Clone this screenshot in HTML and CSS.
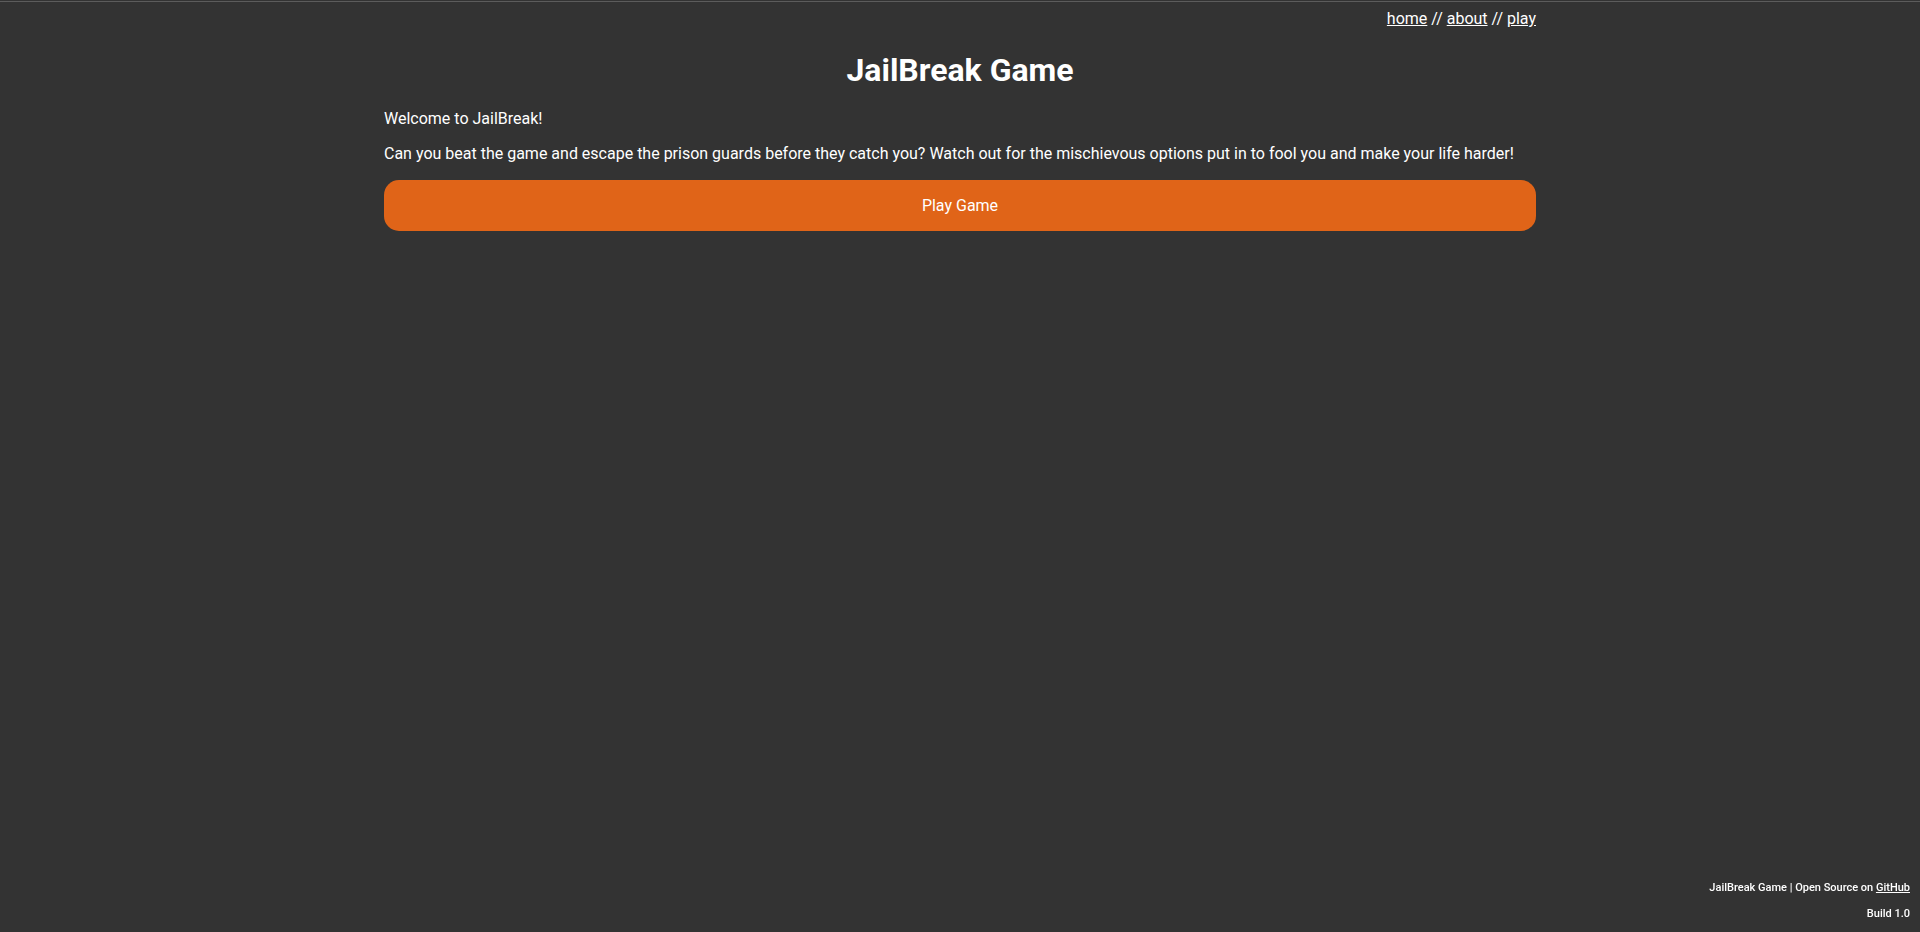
FILE: index.html
```html
<!DOCTYPE html>
<html lang="en">
<head>
<meta charset="utf-8">
<title>JailBreak Game</title>
<link rel="stylesheet" href="styles.css">
</head>
<body>
<div class="container">
  <nav class="nav"><a href="#">home</a> // <a href="#">about</a> // <a href="#">play</a></nav>
  <h1 class="title">JailBreak Game</h1>
  <p class="text">Welcome to JailBreak!</p>
  <p class="text">Can you beat the game and escape the prison guards before they catch you? Watch out for the mischievous options put in to fool you and make your life harder!</p>
  <button class="play">Play Game</button>
</div>
<footer class="footer">
  <p class="foot-line">JailBreak Game | Open Source on <a href="#">GitHub</a></p>
  <p class="foot-line">Build 1.0</p>
</footer>
</body>
</html>
```
FILE: styles.css
```css
html {
  background: linear-gradient(#333333 0 1px, #5c5c5c 1px 2px, #333333 2px) #333333;
  min-height: 100%;
}
body {
  margin: 0;
  padding-top: 10px;
  font-family: Roboto, "Liberation Sans", sans-serif;
  color: #ffffff;
  font-size: 16px;
}
a {
  color: #ffffff;
}
.container {
  width: 1152px;
  margin: 0 auto;
  display: flex;
  flex-direction: column;
}
.nav {
  text-align: right;
  line-height: 18.75px;
}
.title {
  text-align: center;
  font-size: 32px;
  font-weight: 700;
  margin: 23px 0 21px;
  line-height: 37.5px;
}
.text {
  margin: 0 0 16px;
  line-height: 18.75px;
}
.play {
  background: #e06418;
  color: #ffffff;
  border: none;
  border-radius: 15px;
  height: 51px;
  font-family: Roboto, "Liberation Sans", sans-serif;
  font-size: 16px;
  cursor: pointer;
}
.footer {
  position: fixed;
  right: 10px;
  bottom: 12px;
  text-align: right;
  font-size: 11px;
  font-weight: 500;
}
.foot-line {
  margin: 0;
  line-height: 13px;
}
.foot-line + .foot-line {
  margin-top: 13px;
}
```
